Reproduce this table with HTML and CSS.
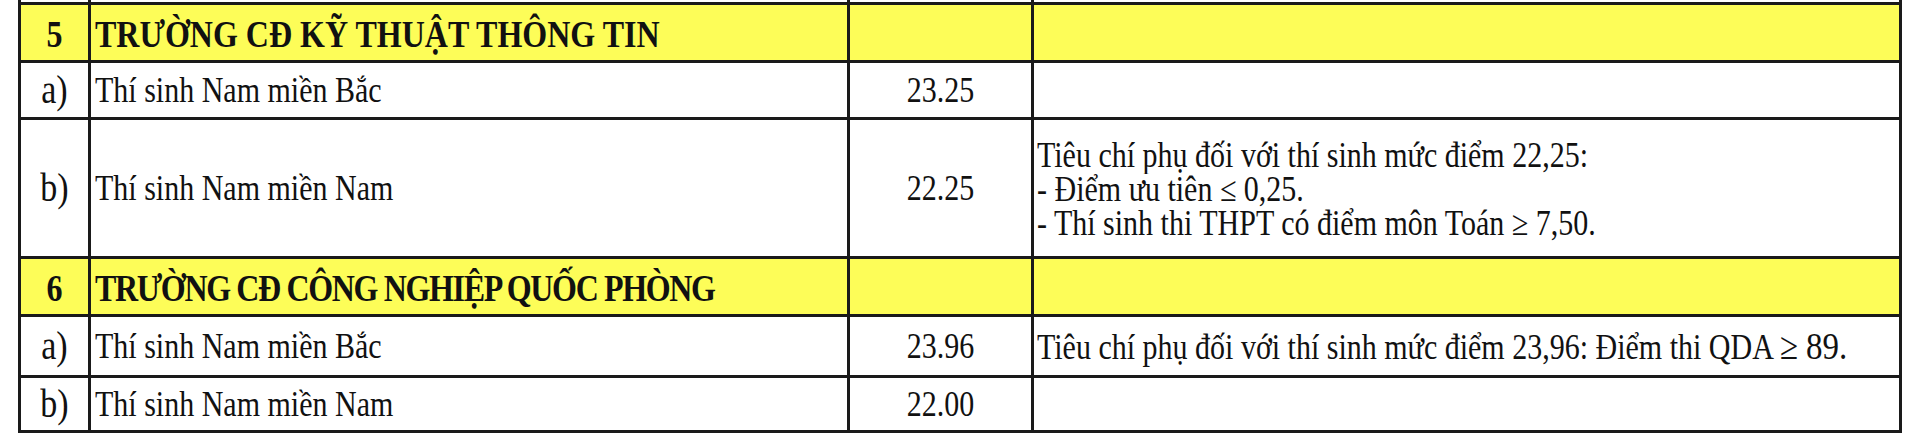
FILE: index.html
```html
<!DOCTYPE html>
<html lang="vi">
<head>
<meta charset="utf-8">
<title>Điểm chuẩn</title>
<link rel="stylesheet" href="styles.css">
</head>
<body>
<table class="grid">
  <colgroup>
    <col class="c1"><col class="c2"><col class="c3"><col class="c4">
  </colgroup>
  <tbody>
    <tr class="stub"><td></td><td></td><td></td><td></td></tr>
    <tr class="head">
      <td class="no"><span class="t">5</span></td>
      <td class="name"><span class="t">TRƯỜNG CĐ KỸ THUẬT THÔNG TIN</span></td>
      <td></td><td></td>
    </tr>
    <tr class="r1">
      <td class="no"><span class="t">a)</span></td>
      <td class="name"><span class="t">Thí sinh Nam miền Bắc</span></td>
      <td class="score"><span class="t">23.25</span></td>
      <td class="note"></td>
    </tr>
    <tr class="r3">
      <td class="no"><span class="t">b)</span></td>
      <td class="name"><span class="t">Thí sinh Nam miền Nam</span></td>
      <td class="score"><span class="t">22.25</span></td>
      <td class="note">
        <div class="line">Tiêu chí phụ đối với thí sinh mức điểm 22,25:</div>
        <div class="line">- Điểm ưu tiên ≤ 0,25.</div>
        <div class="line">- Thí sinh thi THPT có điểm môn Toán ≥ 7,50.</div>
      </td>
    </tr>
    <tr class="head">
      <td class="no"><span class="t">6</span></td>
      <td class="name"><span class="t narrow">TRƯỜNG CĐ CÔNG NGHIỆP QUỐC PHÒNG</span></td>
      <td></td><td></td>
    </tr>
    <tr class="r1b">
      <td class="no"><span class="t">a)</span></td>
      <td class="name"><span class="t">Thí sinh Nam miền Bắc</span></td>
      <td class="score"><span class="t">23.96</span></td>
      <td class="note"><span class="t">Tiêu chí phụ đối với thí sinh mức điểm 23,96: Điểm thi QDA <span class="big">≥ 89.</span></span></td>
    </tr>
    <tr class="r1c">
      <td class="no"><span class="t">b)</span></td>
      <td class="name"><span class="t">Thí sinh Nam miền Nam</span></td>
      <td class="score"><span class="t">22.00</span></td>
      <td class="note"></td>
    </tr>
  </tbody>
</table>
</body>
</html>
```

FILE: styles.css
```css
html, body {
  margin: 0;
  padding: 0;
  background: #ffffff;
}

body {
  font-family: "Liberation Serif", "Times New Roman", serif;
  color: #111111;
}

.grid {
  table-layout: fixed;
  border-collapse: separate;
  border-spacing: 3px;
  background: #1a1a1a;
  width: 1884px;
  margin: -3px 0 0 18px;
}

.c1 { width: 67px; }
.c2 { width: 756px; }
.c3 { width: 181px; }
.c4 { width: 865px; }

.grid td {
  padding: 0;
  background: #ffffff;
  vertical-align: middle;
  white-space: nowrap;
  overflow: hidden;
  line-height: 30px;
}

.stub td { height: 2px; line-height: 0; }
.head td { height: 55px; background: #fdfd58; }
.r1 td { height: 54px; }
.r1b td { height: 58px; }
.r1c td { height: 52px; }
.r3 td { height: 136px; }

.t {
  display: inline-block;
  transform: scaleY(1.17);
  line-height: 30px;
}

.no {
  text-align: center;
  font-size: 34px;
}

.head .no { font-weight: bold; font-size: 32px; }

.name {
  padding-left: 4px !important;
  font-size: 30px;
}

.head .name { font-weight: bold; font-size: 32px; }
.head .t { position: relative; top: 1px; }

.narrow { letter-spacing: -1.35px; }

.score {
  text-align: center;
  font-size: 30px;
}

.note {
  padding-left: 3px !important;
  font-size: 30px;
}

.line {
  height: 29px;
  line-height: 29px;
  margin-bottom: 5px;
  transform: scaleY(1.17);
}

.line:last-child { margin-bottom: 0; }

.big { font-size: 1.1em; }
```
